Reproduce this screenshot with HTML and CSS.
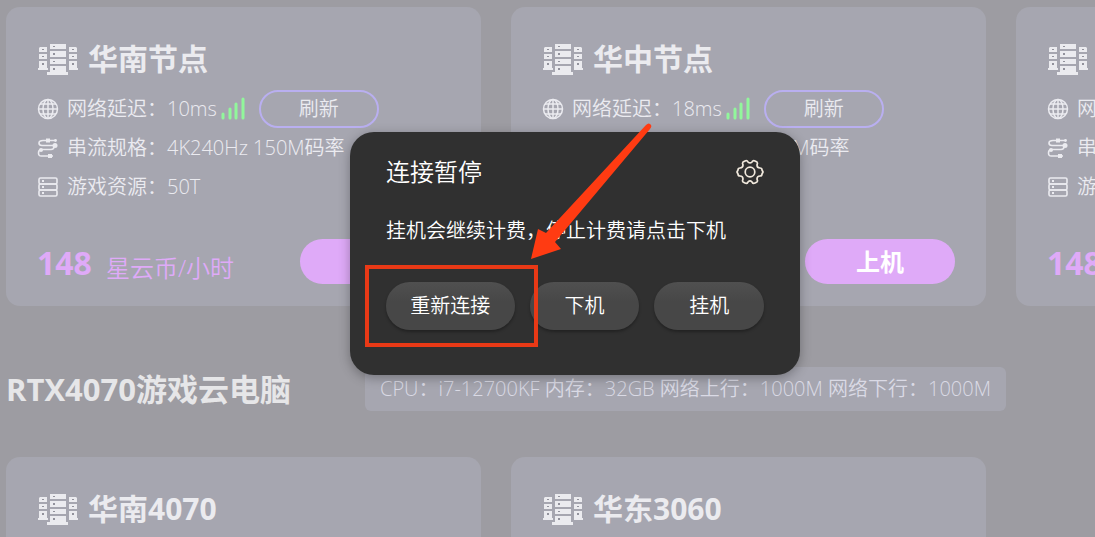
FILE: index.html
```html
<!DOCTYPE html>
<html lang="zh-CN">
<head>
  <meta charset="UTF-8" />
  <meta name="viewport" content="width=device-width, initial-scale=1" />
  <title>游戏云电脑</title>
  <link rel="stylesheet" href="styles.css">
</head>
<body>

  <!-- Shared icons -->
  <svg class="icon-defs" aria-hidden="true">
    <symbol id="icon-servers" viewBox="0 0 42 32">
      <path d="M13 1h16v5H13zM13 8h16v6H13zM13 16h16v5H13zM13 23h16v6h2v3H10v-3h3z"/>
      <path d="M3 4h7v5H2V5zM2 11h8v5H2zM2 18h8v7h1v2H1v-2h1zM32 4h7l1 1v4h-8zM32 11h8v5h-8zM32 18h8v7h1v2h-9z"/>
      <path class="icon-dot" d="M16 3h2v1h-2zM16 10h2v2h-2zM16 18h2v1h-2zM16 25h2v2h-2zM5 6h2v1H5zM5 13h2v1H5zM5 20h2v2H5zM35 6h2v1h-2zM35 13h2v1h-2zM35 20h2v2h-2z"/>
    </symbol>
    <symbol id="icon-globe" viewBox="0 0 22 22">
      <g fill="none" stroke="currentColor" stroke-width="1.5">
        <circle cx="11" cy="11" r="9.5"/>
        <ellipse cx="11" cy="11" rx="5" ry="9.5"/>
        <path d="M11 1v20M1 11h20M3 6h16M3 16h16"/>
      </g>
    </symbol>
    <symbol id="icon-stream" viewBox="0 0 22 22">
      <path fill="none" stroke="currentColor" stroke-width="1.6" d="M19 3.500H6Q2 3.500 2 6T5 8.500H16M17 9.500Q17 12.500 14 12.500H5Q1.500 12.500 1.500 16T5 19H16"/>
      <path d="M9 1.500h4v4H9zM11 17h4v4h-4z"/>
      <circle cx="18" cy="8.500" r="2.500"/><circle cx="4" cy="13" r="2"/><circle cx="18.500" cy="3.500" r="1.400"/>
    </symbol>
    <symbol id="icon-disk" viewBox="0 0 22 22">
      <g fill="none" stroke="currentColor" stroke-width="1.6">
        <rect x="2" y="2" width="18" height="6" rx="1.5"/>
        <rect x="2" y="8" width="18" height="6" rx="1.5"/>
        <rect x="2" y="14" width="18" height="6" rx="1.5"/>
      </g>
      <path d="M5 4h2v2H5zM5 10h2v2H5zM5 16h2v2H5z"/>
    </symbol>
    <symbol id="icon-signal" viewBox="0 0 24 24">
      <path fill="none" stroke="currentColor" stroke-width="3" stroke-linecap="round" d="M2 17v4M9 12v9M15 7v14M22 2v19"/>
    </symbol>
  </svg>

  <main class="page">
    <section class="node-list">
      <article class="node-card">
        <h2 class="node-name"><svg class="server-icon"><use href="#icon-servers"/></svg>华南节点</h2>
        <ul class="node-info">
          <li><svg class="info-icon"><use href="#icon-globe"/></svg>网络延迟：10ms<svg class="signal-icon"><use href="#icon-signal"/></svg><button class="refresh-button">刷新</button></li>
          <li><svg class="info-icon"><use href="#icon-stream"/></svg>串流规格：4K240Hz 150M码率</li>
          <li><svg class="info-icon"><use href="#icon-disk"/></svg>游戏资源：50T</li>
        </ul>
        <div class="node-footer">
          <span class="price">148</span><span class="unit">星云币/小时</span>
          <button class="start-button">上机</button>
        </div>
      </article>

      <article class="node-card">
        <h2 class="node-name"><svg class="server-icon"><use href="#icon-servers"/></svg>华中节点</h2>
        <ul class="node-info">
          <li><svg class="info-icon"><use href="#icon-globe"/></svg>网络延迟：18ms<svg class="signal-icon"><use href="#icon-signal"/></svg><button class="refresh-button">刷新</button></li>
          <li><svg class="info-icon"><use href="#icon-stream"/></svg>串流规格：4K240Hz 150M码率</li>
          <li><svg class="info-icon"><use href="#icon-disk"/></svg>游戏资源：50T</li>
        </ul>
        <div class="node-footer">
          <span class="price">148</span><span class="unit">星云币/小时</span>
          <button class="start-button">上机</button>
        </div>
      </article>

      <article class="node-card">
        <h2 class="node-name"><svg class="server-icon"><use href="#icon-servers"/></svg></h2>
        <ul class="node-info">
          <li><svg class="info-icon"><use href="#icon-globe"/></svg>网络延迟：</li>
          <li><svg class="info-icon"><use href="#icon-stream"/></svg>串流规格：</li>
          <li><svg class="info-icon"><use href="#icon-disk"/></svg>游戏资源：</li>
        </ul>
        <div class="node-footer">
          <span class="price">148</span>
        </div>
      </article>
    </section>

    <header class="section-header">
      <h1 class="section-title">RTX4070游戏云电脑</h1>
      <p class="spec">CPU：i7-12700KF 内存：32GB 网络上行：1000M 网络下行：1000M</p>
    </header>

    <section class="node-list">
      <article class="node-card">
        <h2 class="node-name"><svg class="server-icon"><use href="#icon-servers"/></svg>华南4070</h2>
      </article>
      <article class="node-card">
        <h2 class="node-name"><svg class="server-icon"><use href="#icon-servers"/></svg>华东3060</h2>
      </article>
    </section>
  </main>

  <!-- Pause dialog -->
  <div class="dialog" role="dialog" aria-labelledby="dialog-title">
    <div class="dialog-header">
      <h2 class="dialog-title" id="dialog-title">连接暂停</h2>
      <button class="settings-button" aria-label="设置">
        <svg viewBox="0 0 28 28" width="28" height="28" fill="none" stroke="currentColor" stroke-width="1.7" stroke-linejoin="round">
          <path d="M9 3Q11 2 12 4Q14 6 16 4Q17 2 19 3L21 4Q22 5 21 7Q21 10 24 10Q26 10 26 12L27 14L26 16Q26 18 24 18Q21 18 21 21Q22 23 21 24L19 25Q17 26 16 24Q14 22 12 24Q11 26 9 25L7 24Q6 23 7 21Q7 18 4 18Q2 18 2 16L1 14L2 12Q2 10 4 10Q7 10 7 7Q6 5 7 4Z"/>
          <circle cx="14" cy="14" r="4.8"/>
        </svg>
      </button>
    </div>
    <p class="dialog-text">挂机会继续计费，停止计费请点击下机</p>
    <div class="dialog-actions">
      <button class="dialog-button wide">重新连接</button>
      <button class="dialog-button">下机</button>
      <button class="dialog-button">挂机</button>
    </div>

    <!-- Pointer to the reconnect button -->
    <svg class="hint" viewBox="0 0 300 230" width="300" height="230" aria-hidden="true">
      <rect x="2" y="147" width="169" height="78" fill="none" stroke="#e93916" stroke-width="4"/>
      <path fill="#ff3b12" d="M166 139L173 109L181 113L281 5Q284 2 286 5Q287 7 285 9L190 122L196 129Z"/>
    </svg>
  </div>

</body>
</html>
```
FILE: styles.css
```css
:root {
  --bg: #9d9ca2;
  --card-bg: #a6a6b0;
  --text: #ebebf0;
  --title: #ebebef;
  --accent: #dfaaf8;
  --outline: #b9aff0;
  --dialog-bg: #303030;
}

* {
  box-sizing: border-box;
}

body {
  margin: 0;
  height: 100vh;
  overflow: hidden;
  background: var(--bg);
  color: var(--text);
  font-family: "Open Sans", "Noto Sans CJK SC", sans-serif;
  font-size: 20px;
  font-weight: 350;
  line-height: 24px;
}

h1, h2, p, ul {
  margin: 0;
  padding: 0;
}

button {
  padding: 0;
  border: none;
  background: none;
  color: inherit;
  font: inherit;
  cursor: pointer;
}

svg {
  flex-shrink: 0;
  fill: currentColor;
}

.icon-defs {
  display: none;
}

.page {
  padding: 7px 6px;
}

.node-list {
  display: grid;
  grid-auto-flow: column;
  grid-auto-columns: minmax(475px, 43vw);
  gap: 30px;
}

.node-card {
  padding: 32px 31px 22px;
  border-radius: 14px;
  background: var(--card-bg);
  white-space: nowrap;
}

.node-name {
  display: flex;
  align-items: center;
  gap: 9px;
  height: 40px;
  color: var(--title);
  font-size: 30px;
  font-weight: 700;
}

.server-icon {
  width: 42px;
  height: 32px;
}

.icon-dot {
  fill: #92929c;
}

.node-info {
  padding-top: 10px;
  list-style: none;
}

.node-info li {
  display: flex;
  align-items: center;
  height: 39px;
}

.info-icon {
  width: 22px;
  height: 22px;
  margin-right: 8px;
}

.signal-icon {
  width: 24px;
  height: 24px;
  margin: 0 14px 0 4px;
  color: #91f79b;
}

.refresh-button {
  width: 120px;
  height: 38px;
  border: 2px solid var(--outline);
  border-radius: 20px;
}

.node-footer {
  display: flex;
  align-items: center;
  height: 45px;
  margin-top: 33px;
  color: var(--accent);
}

.price {
  padding-top: 2px;
  font-size: 32px;
  font-weight: 700;
}

.unit {
  padding-top: 12px;
  margin-left: 14px;
  font-size: 24px;
}

.start-button {
  width: 150px;
  height: 45px;
  margin-left: auto;
  border-radius: 24px;
  background: var(--accent);
  color: #ffffff;
  font-size: 24px;
  font-weight: 700;
}

.section-header {
  display: flex;
  align-items: center;
  gap: 74px;
  padding: 61px 0 46px;
  white-space: nowrap;
}

.section-title {
  color: #e6e6e8;
  font-size: 31px;
  font-weight: 700;
}

.spec {
  padding: 10px 15px;
  border-radius: 6px;
  background: var(--card-bg);
  color: #dadae5;
}

.dialog {
  position: absolute;
  top: 132px;
  left: 350px;
  width: 450px;
  padding: 24px 36px 45px;
  border-radius: 24px;
  background: var(--dialog-bg);
  box-shadow: 0 3px 12px rgba(0, 0, 0, 0.3);
  color: #ffffff;
}

.dialog-header {
  display: flex;
  align-items: center;
  justify-content: space-between;
  height: 32px;
}

.dialog-title {
  font-size: 24px;
  font-weight: 350;
}

.settings-button {
  display: flex;
  color: #f0e8dc;
}

.settings-button svg {
  fill: none;
}

.dialog-text {
  padding: 31px 0 39px;
  white-space: nowrap;
}

.dialog-actions {
  display: flex;
  gap: 15px;
}

.dialog-button {
  width: 110px;
  height: 48px;
  border-radius: 24px;
  background: linear-gradient(#505050, #474747 40%);
  box-shadow: 0 2px 3px rgba(0, 0, 0, 0.3);
}

.dialog-button.wide {
  width: 129px;
}

.hint {
  position: absolute;
  top: -12px;
  left: 15px;
  pointer-events: none;
}
```
